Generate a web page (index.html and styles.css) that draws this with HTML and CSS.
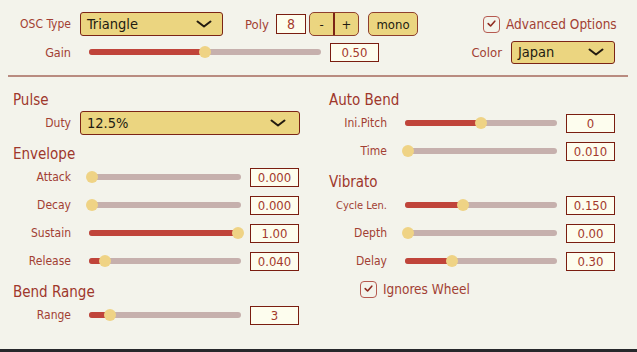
FILE: index.html
```html
<!DOCTYPE html>
<html>
<head>
<meta charset="utf-8">
<link rel="stylesheet" href="styles.css">
</head>
<body>
<div class="app">
  <div class="top">
    <div class="row">
      <span class="lbl lbl-main">OSC Type</span>
      <div class="select sel-osc"><span>Triangle</span><svg class="chev" viewBox="0 0 16 8" width="16" height="8"><polyline points="1.5,1.5 8,6.5 14.5,1.5"/></svg></div>
      <span class="lbl lbl-poly">Poly</span>
      <div class="num num-poly">8</div>
      <div class="stepper"><span class="step">-</span><span class="step step-plus">+</span></div>
      <div class="btn btn-mono">mono</div>
      <div class="check check-adv"><span class="cbox"><svg viewBox="0 0 17 17" width="17" height="17"><polyline points="5.2,8.6 7.6,11 11.8,6.2"/></svg></span><span class="check-text">Advanced Options</span></div>
    </div>
    <div class="row">
      <span class="lbl lbl-main lbl-gain">Gain</span>
      <div class="slider slider-gain"><div class="fill" style="width:116px"></div><div class="thumb" style="left:110px"></div></div>
      <div class="num num-val">0.50</div>
      <span class="lbl lbl-color">Color</span>
      <div class="select sel-color"><span>Japan</span><svg class="chev" viewBox="0 0 16 8" width="16" height="8"><polyline points="1.5,1.5 8,6.5 14.5,1.5"/></svg></div>
    </div>
  </div>
  <div class="divider"></div>
  <div class="cols">
    <div class="col">
      <h2 class="head head-first">Pulse</h2>
      <div class="prow">
        <span class="lbl plbl">Duty</span>
        <div class="select sel-duty"><span>12.5%</span><svg class="chev" viewBox="0 0 16 8" width="16" height="8"><polyline points="1.5,1.5 8,6.5 14.5,1.5"/></svg></div>
      </div>
      <h2 class="head">Envelope</h2>
      <div class="prow">
        <span class="lbl plbl">Attack</span>
        <div class="slider slider-p"><div class="fill" style="width:3px"></div><div class="thumb" style="left:-3px"></div></div>
        <div class="num num-val">0.000</div>
      </div>
      <div class="prow">
        <span class="lbl plbl">Decay</span>
        <div class="slider slider-p"><div class="fill" style="width:3px"></div><div class="thumb" style="left:-3px"></div></div>
        <div class="num num-val">0.000</div>
      </div>
      <div class="prow">
        <span class="lbl plbl">Sustain</span>
        <div class="slider slider-p"><div class="fill" style="width:149px"></div><div class="thumb" style="left:143px"></div></div>
        <div class="num num-val">1.00</div>
      </div>
      <div class="prow">
        <span class="lbl plbl">Release</span>
        <div class="slider slider-p"><div class="fill" style="width:16px"></div><div class="thumb" style="left:10px"></div></div>
        <div class="num num-val">0.040</div>
      </div>
      <h2 class="head">Bend Range</h2>
      <div class="prow">
        <span class="lbl plbl">Range</span>
        <div class="slider slider-p"><div class="fill" style="width:21px"></div><div class="thumb" style="left:15px"></div></div>
        <div class="num num-val">3</div>
      </div>
    </div>
    <div class="col">
      <h2 class="head head-first">Auto Bend</h2>
      <div class="prow">
        <span class="lbl plbl">Ini.Pitch</span>
        <div class="slider slider-p"><div class="fill" style="width:76px"></div><div class="thumb" style="left:70px"></div></div>
        <div class="num num-val">0</div>
      </div>
      <div class="prow">
        <span class="lbl plbl">Time</span>
        <div class="slider slider-p"><div class="fill" style="width:3px"></div><div class="thumb" style="left:-3px"></div></div>
        <div class="num num-val">0.010</div>
      </div>
      <h2 class="head">Vibrato</h2>
      <div class="prow">
        <span class="lbl plbl plbl-small">Cycle Len.</span>
        <div class="slider slider-p"><div class="fill" style="width:58px"></div><div class="thumb" style="left:52px"></div></div>
        <div class="num num-val">0.150</div>
      </div>
      <div class="prow">
        <span class="lbl plbl">Depth</span>
        <div class="slider slider-p"><div class="fill" style="width:3px"></div><div class="thumb" style="left:-3px"></div></div>
        <div class="num num-val">0.00</div>
      </div>
      <div class="prow">
        <span class="lbl plbl">Delay</span>
        <div class="slider slider-p"><div class="fill" style="width:47px"></div><div class="thumb" style="left:41px"></div></div>
        <div class="num num-val">0.30</div>
      </div>
      <div class="prow">
        <div class="check check-wheel"><span class="cbox"><svg viewBox="0 0 17 17" width="17" height="17"><polyline points="5.2,8.6 7.6,11 11.8,6.2"/></svg></span><span class="check-text">Ignores Wheel</span></div>
      </div>
    </div>
  </div>
</div>
<div class="footer"></div>
</body>
</html>
```
FILE: styles.css
```css
* { box-sizing: border-box; }
html, body { margin: 0; padding: 0; }
body {
  background: #f3f3eb;
  font-family: "DejaVu Sans Condensed", "DejaVu Sans", sans-serif;
  font-stretch: condensed;
  color: #a03c31;
  width: 637px;
  height: 352px;
  overflow: hidden;
}
.app { height: 349px; }
.footer { height: 3px; background: #26282b; }

.top { padding-top: 10px; }
.row {
  display: flex;
  align-items: center;
  height: 28px;
  padding-left: 13px;
}
.lbl {
  font-size: 12px;
  color: #a23f33;
  white-space: nowrap;
  flex: none;
}
.lbl-main { width: 58px; text-align: right; margin-right: 9px; }
.lbl-gain { font-size: 12.5px; margin-right: 18px; }
.lbl-poly { width: 25px; margin-left: 22px; margin-right: 6px; font-size: 13px; }
.lbl-color { width: 60px; text-align: right; margin-left: 63px; margin-right: 9px; font-size: 13px; }

.select {
  flex: none;
  display: flex;
  align-items: center;
  justify-content: space-between;
  height: 24px;
  background: #ebd580;
  border: 1px solid #7b2416;
  border-radius: 3px;
  padding: 0 10px 0 6px;
  color: #221c12;
  font-size: 14.5px;
}
.sel-osc { width: 143px; }
.sel-color { width: 104px; height: 23px; padding-left: 6px; }
.sel-duty { width: 220px; padding-right: 13px; }
.chev { display: block; }
.chev polyline { fill: none; stroke: #231b10; stroke-width: 2; stroke-linecap: round; stroke-linejoin: round; }

.num {
  flex: none;
  display: flex;
  align-items: center;
  justify-content: center;
  background: #fdfdee;
  border: 1px solid #7a1d10;
  color: #a3392c;
  font-size: 13px;
}
.num-poly { width: 30px; height: 20px; font-size: 14px; margin-right: 3px; }
.num-val { width: 49px; height: 19px; margin-left: 9px; }

.stepper {
  flex: none;
  display: flex;
  width: 50px;
  height: 24px;
  background: #ebd580;
  border: 1px solid #8e3f2e;
  border-radius: 5px;
  overflow: hidden;
  color: #221c12;
  font-size: 13px;
}
.step { flex: 1; display: flex; align-items: center; justify-content: center; }
.step-plus { border-left: 2px solid #7b2416; }

.btn {
  flex: none;
  display: flex;
  align-items: center;
  justify-content: center;
  height: 24px;
  background: #ebd580;
  border: 1px solid #8e3f2e;
  border-radius: 5px;
  color: #221c12;
  font-size: 13px;
}
.btn-mono { width: 50px; margin-left: 9px; }

.check { flex: none; display: flex; align-items: center; }
.cbox {
  width: 17px;
  height: 17px;
  border: 1.5px solid #b65a50;
  border-radius: 4px;
  display: block;
  position: relative;
  margin-right: 6px;
}
.cbox svg { position: absolute; left: -1.5px; top: -1.5px; }
.cbox polyline { fill: none; stroke: #8f2a1f; stroke-width: 1.6; stroke-linecap: round; stroke-linejoin: round; }
.check-text { font-size: 13.5px; color: #a23f33; white-space: nowrap; }
.check-adv { margin-left: 65px; }
.check-wheel { margin-left: 31px; }

.slider {
  flex: none;
  position: relative;
  height: 6px;
  border-radius: 3px;
  background: #c6b0ad;
}
.slider-gain { width: 232px; }
.slider-p { width: 152px; margin-left: 9px; }
.fill {
  position: absolute;
  left: 0;
  top: 0;
  height: 6px;
  border-radius: 3px 0 0 3px;
  background: #c0443a;
}
.thumb {
  position: absolute;
  top: -3px;
  width: 12px;
  height: 12px;
  border-radius: 50%;
  background: #efd385;
}

.divider {
  height: 2px;
  background: #b98b80;
  margin: 9px 9px 0 8px;
}

.cols { display: flex; padding-left: 13px; padding-top: 15px; }
.col { width: 316px; flex: none; }
.head {
  margin: 9px 0 0 0;
  font-size: 15px;
  font-weight: normal;
  line-height: 17px;
  height: 17px;
  color: #9e372b;
}
.head-first { margin-top: 0; }
.prow { display: flex; align-items: center; height: 28px; }
.plbl { width: 58px; text-align: right; margin-right: 9px; }
.plbl-small { font-size: 11px; }
```
